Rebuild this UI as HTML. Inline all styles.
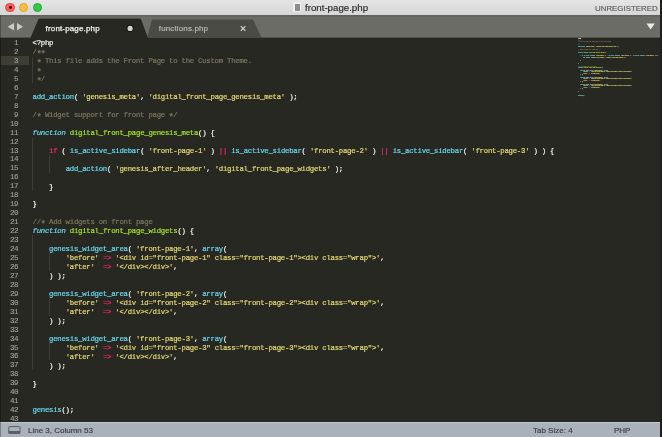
<!DOCTYPE html>
<html><head><meta charset="utf-8">
<style>
html,body{margin:0;padding:0;}
body{width:662px;height:437px;overflow:hidden;position:relative;background:#272822;font-family:"Liberation Sans",sans-serif;}
.abs{position:absolute;}
#title{will-change:transform;left:0;top:0;width:662px;height:15px;background:linear-gradient(#e6e5e6,#d6d6d6);}
.light{position:absolute;top:3px;width:9px;height:9px;border-radius:50%;box-sizing:border-box;}
#ttl{position:absolute;left:305px;top:2.4px;font-size:9.7px;line-height:12px;color:#262626;white-space:nowrap;-webkit-text-stroke:0.15px currentColor;}
#unreg{position:absolute;left:595px;top:4.1px;font-size:7.9px;letter-spacing:0px;line-height:10px;color:#5c5c5c;white-space:nowrap;-webkit-text-stroke:0.15px currentColor;}
#tabbar{will-change:transform;left:0;top:15px;width:662px;height:23px;background:#6b6c66;}
#editor{left:0;top:38px;width:662px;height:384px;background:#272822;overflow:hidden;will-change:transform;}
#gut{position:absolute;left:0;top:1.1px;width:18.2px;text-align:right;font-family:"Liberation Mono",monospace;font-size:7.6px;letter-spacing:-0.42px;line-height:8.95px;color:#a2a39d;white-space:pre;-webkit-text-stroke:0.1px currentColor;}
#code{position:absolute;left:32.5px;top:1.3px;font-family:"Liberation Mono",monospace;font-size:7.3px;letter-spacing:-0.24px;line-height:8.95px;color:#f8f8f2;-webkit-text-stroke:0.2px currentColor;white-space:pre;}
#mini{position:absolute;left:578px;top:0.3px;opacity:0.9;font-family:"Liberation Mono",monospace;font-size:6.9px;line-height:8.94px;color:#f8f8f2;font-weight:bold;-webkit-text-stroke:0.5px currentColor;white-space:pre;transform:scale(0.154,0.1555);transform-origin:0 0;}
.guide{position:absolute;width:1px;background:#3b3c36;}
.c{color:#7b775f}.ast{display:inline-block;transform:translateY(2.7px) scale(1.25);}.k{color:#f92672}.s{color:#e6db74}.b{color:#66d9ef}.i{color:#66d9ef;font-style:italic}.g{color:#a6e22e}
#status{will-change:transform;left:0;top:422px;width:662px;height:15px;background:#aab1ba;}
.st{position:absolute;top:2.5px;font-size:8px;line-height:11px;color:#383b40;white-space:nowrap;-webkit-text-stroke:0.15px currentColor;}
</style></head><body>
<div id="title" class="abs">
  <div class="light" style="left:5.2px;top:2.6px;width:9.6px;height:9.6px;background:#fc605c;border:0.5px solid #e0443e;"><div style="position:absolute;left:2.9px;top:2.9px;width:2.8px;height:2.8px;border-radius:50%;background:#4d0000;"></div></div>
  <div class="light" style="left:18.8px;top:2.6px;width:9.6px;height:9.6px;background:#fdbc40;border:0.5px solid #dea123;"></div>
  <div class="light" style="left:32.5px;top:2.6px;width:9.6px;height:9.6px;background:#34c84a;border:0.5px solid #1aab29;"></div>
  <div class="abs" style="left:293.2px;top:2.4px;width:8px;height:9.6px;background:#f0f0f0;border-radius:1px;"></div><div class="abs" style="left:294.5px;top:4px;width:5.6px;height:6.6px;background:#8e8e8e;"></div>
  <div id="ttl">front-page.php</div>
  <div id="unreg">UNREGISTERED</div>
</div>
<div id="tabbar" class="abs">
  <svg class="abs" style="left:0;top:0" width="662" height="23" viewBox="0 15 662 23">
    <rect x="0" y="15" width="662" height="1.6" fill="#60615b"/><rect x="0" y="36.6" width="662" height="1" fill="#74756f"/><rect x="0" y="37.6" width="662" height="0.6" fill="#1e1f1a"/>
    <polygon points="7.5,26.7 14,23 14,30.5" fill="#c9c9c6"/>
    <polygon points="23,26.7 17,23 17,30.5" fill="#c9c9c6"/>
    <polygon points="147,38 152,19.5 253,19.5 261.7,38" fill="#4a4b45"/>
    <polygon points="30.6,38.5 39,19 140.5,19 147.7,38.5" fill="#272822" stroke="#1c1d19" stroke-width="0.7" stroke-linejoin="round"/>
    <polygon points="646.5,23.4 654.8,23.4 650.6,29.6" fill="#ebebea"/>
    <circle cx="130.1" cy="28.4" r="3.6" fill="#141410"/><circle cx="130.1" cy="28.4" r="2.6" fill="#d4d4d2"/>
    <path d="M240.8 26.1 L245.4 30.7 M245.4 26.1 L240.8 30.7" stroke="#cbcbc7" stroke-width="1.25"/>
  </svg>
  <div class="abs" style="left:45.6px;top:8.4px;font-size:8px;letter-spacing:0.15px;line-height:11px;color:#f4f4f2;white-space:nowrap;-webkit-text-stroke:0.25px currentColor;">front-page.php</div>
  <div class="abs" style="left:158.8px;top:8.4px;font-size:8px;letter-spacing:0.14px;line-height:11px;color:#bdbeb9;white-space:nowrap;-webkit-text-stroke:0.15px currentColor;">functions.php</div>
</div>
<div id="editor" class="abs">
  <div class="abs" style="left:1.4px;top:18.3px;width:28px;height:8.7px;background:#3e3d32;"></div>
  <div class="guide" style="left:32.40px;top:18.69px;height:26.79px"></div>
<div class="guide" style="left:32.40px;top:99.06px;height:53.58px"></div>
<div class="guide" style="left:49.28px;top:116.92px;height:17.86px"></div>
<div class="guide" style="left:32.40px;top:197.29px;height:133.95px"></div>
<div class="guide" style="left:49.28px;top:215.15px;height:17.86px"></div>
<div class="guide" style="left:49.28px;top:259.80px;height:17.86px"></div>
<div class="guide" style="left:49.28px;top:304.45px;height:17.86px"></div>
  <div id="gut">1
2
3
4
5
6
7
8
9
10
11
12
13
14
15
16
17
18
19
20
21
22
23
24
25
26
27
28
29
30
31
32
33
34
35
36
37
38
39
40
41
42
43</div>
  <div id="code">&lt;?php
<span class="c">/<span class="ast">*</span><span class="ast">*</span></span>
<span class="c"> <span class="ast">*</span> This file adds the Front Page to the Custom Theme.</span>
<span class="c"> <span class="ast">*</span></span>
<span class="c"> <span class="ast">*</span>/</span>

<span class="b">add_action</span>( <span class="s">'genesis_meta'</span>, <span class="s">'digital_front_page_genesis_meta'</span> );

<span class="c">/<span class="ast">*</span> Widget support for front page <span class="ast">*</span>/</span>

<span class="i">function</span> <span class="g">digital_front_page_genesis_meta</span>() {

    <span class="k">if</span> ( <span class="b">is_active_sidebar</span>( <span class="s">'front-page-1'</span> ) <span class="k">||</span> <span class="b">is_active_sidebar</span>( <span class="s">'front-page-2'</span> ) <span class="k">||</span> <span class="b">is_active_sidebar</span>( <span class="s">'front-page-3'</span> ) ) {

        <span class="b">add_action</span>( <span class="s">'genesis_after_header'</span>, <span class="s">'digital_front_page_widgets'</span> );

    }

}

<span class="c">//<span class="ast">*</span> Add widgets on front page</span>
<span class="i">function</span> <span class="g">digital_front_page_widgets</span>() {

    <span class="b">genesis_widget_area</span>( <span class="s">'front-page-1'</span>, <span class="b">array</span>(
        <span class="s">'before'</span> <span class="k">=&gt;</span> <span class="s">'&lt;div id="front-page-1" class="front-page-1"&gt;&lt;div class="wrap"&gt;'</span>,
        <span class="s">'after'</span>  <span class="k">=&gt;</span> <span class="s">'&lt;/div&gt;&lt;/div&gt;'</span>,
    ) );

    <span class="b">genesis_widget_area</span>( <span class="s">'front-page-2'</span>, <span class="b">array</span>(
        <span class="s">'before'</span> <span class="k">=&gt;</span> <span class="s">'&lt;div id="front-page-2" class="front-page-2"&gt;&lt;div class="wrap"&gt;'</span>,
        <span class="s">'after'</span>  <span class="k">=&gt;</span> <span class="s">'&lt;/div&gt;&lt;/div&gt;'</span>,
    ) );

    <span class="b">genesis_widget_area</span>( <span class="s">'front-page-3'</span>, <span class="b">array</span>(
        <span class="s">'before'</span> <span class="k">=&gt;</span> <span class="s">'&lt;div id="front-page-3" class="front-page-3"&gt;&lt;div class="wrap"&gt;'</span>,
        <span class="s">'after'</span>  <span class="k">=&gt;</span> <span class="s">'&lt;/div&gt;&lt;/div&gt;'</span>,
    ) );

}


<span class="b">genesis</span>();
</div>
  <div id="mini">&lt;?php
<span class="c">/<span class="ast">*</span><span class="ast">*</span></span>
<span class="c"> <span class="ast">*</span> This file adds the Front Page to the Custom Theme.</span>
<span class="c"> <span class="ast">*</span></span>
<span class="c"> <span class="ast">*</span>/</span>

<span class="b">add_action</span>( <span class="s">'genesis_meta'</span>, <span class="s">'digital_front_page_genesis_meta'</span> );

<span class="c">/<span class="ast">*</span> Widget support for front page <span class="ast">*</span>/</span>

<span class="i">function</span> <span class="g">digital_front_page_genesis_meta</span>() {

    <span class="k">if</span> ( <span class="b">is_active_sidebar</span>( <span class="s">'front-page-1'</span> ) <span class="k">||</span> <span class="b">is_active_sidebar</span>( <span class="s">'front-page-2'</span> ) <span class="k">||</span> <span class="b">is_active_sidebar</span>( <span class="s">'front-page-3'</span> ) ) {

        <span class="b">add_action</span>( <span class="s">'genesis_after_header'</span>, <span class="s">'digital_front_page_widgets'</span> );

    }

}

<span class="c">//<span class="ast">*</span> Add widgets on front page</span>
<span class="i">function</span> <span class="g">digital_front_page_widgets</span>() {

    <span class="b">genesis_widget_area</span>( <span class="s">'front-page-1'</span>, <span class="b">array</span>(
        <span class="s">'before'</span> <span class="k">=&gt;</span> <span class="s">'&lt;div id="front-page-1" class="front-page-1"&gt;&lt;div class="wrap"&gt;'</span>,
        <span class="s">'after'</span>  <span class="k">=&gt;</span> <span class="s">'&lt;/div&gt;&lt;/div&gt;'</span>,
    ) );

    <span class="b">genesis_widget_area</span>( <span class="s">'front-page-2'</span>, <span class="b">array</span>(
        <span class="s">'before'</span> <span class="k">=&gt;</span> <span class="s">'&lt;div id="front-page-2" class="front-page-2"&gt;&lt;div class="wrap"&gt;'</span>,
        <span class="s">'after'</span>  <span class="k">=&gt;</span> <span class="s">'&lt;/div&gt;&lt;/div&gt;'</span>,
    ) );

    <span class="b">genesis_widget_area</span>( <span class="s">'front-page-3'</span>, <span class="b">array</span>(
        <span class="s">'before'</span> <span class="k">=&gt;</span> <span class="s">'&lt;div id="front-page-3" class="front-page-3"&gt;&lt;div class="wrap"&gt;'</span>,
        <span class="s">'after'</span>  <span class="k">=&gt;</span> <span class="s">'&lt;/div&gt;&lt;/div&gt;'</span>,
    ) );

}


<span class="b">genesis</span>();
</div>
</div>
<div id="status" class="abs"><div class="abs" style="left:0;top:0;width:662px;height:1px;background:#c3c8ce;"></div>
  <svg class="abs" style="left:8px;top:4px" width="13" height="8" viewBox="0 0 13 8">
    <rect x="0.8" y="0.6" width="11.2" height="7" rx="0.8" fill="none" stroke="#5a5d62" stroke-width="1"/>
    <rect x="0.5" y="5" width="11.5" height="2.5" fill="#5a5d62"/>
  </svg>
  <div class="st" style="left:28px;">Line 3, Column 53</div>
  <div class="st" style="left:533px;">Tab Size: 4</div>
  <div class="st" style="left:614px;">PHP</div>
</div>
<div class="abs" style="left:0;top:15px;width:1.3px;height:422px;background:rgba(0,0,0,0.28);"></div>
<div class="abs" style="left:660.3px;top:0;width:1.7px;height:437px;background:#1e1f1c;"></div>
</body></html>
